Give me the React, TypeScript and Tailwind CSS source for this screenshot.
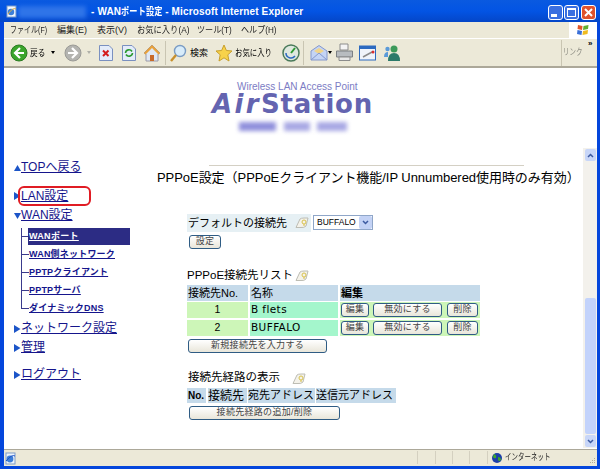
import React from "react";

const cjk = '"Liberation Sans","Noto Sans CJK JP",sans-serif';

function Memo({ x, y }: { x: number; y: number }) {
  return (
    <svg className="absolute" style={{ left: x, top: y }} width="15" height="12" viewBox="0 0 15 12">
      <path d="M1 10.5 L5 2 Q6 1 9 1 L13 1 L11 9 Q9 11 6 10.5 Z" fill="#f4f2ea" stroke="#bdbdb4" strokeWidth="1" />
      <circle cx="9" cy="5" r="2" fill="none" stroke="#d8c14a" strokeWidth="1" />
      <path d="M9 7 V9" stroke="#d8c14a" />
    </svg>
  );
}

function Btn({ x, y, w, h = 13, children }: { x: number; y: number; w: number; h?: number; children: React.ReactNode }) {
  return (
    <div
      className="absolute flex items-center justify-center rounded-[3px] border border-[#2f5c84] bg-gradient-to-b from-white to-[#e9e6da] text-[9px] tracking-[0.3px] text-[#444444]"
      style={{ left: x, top: y, width: w, height: h, fontFamily: cjk }}
    >
      {children}
    </div>
  );
}

function Cell({ x, y, w, h, bg, children, cls = "" }: { x: number; y: number; w: number; h: number; bg: string; children?: React.ReactNode; cls?: string }) {
  return (
    <div className={"absolute flex items-center whitespace-nowrap text-black " + cls} style={{ left: x, top: y, width: w, height: h, background: bg, fontFamily: cjk }}>
      {children}
    </div>
  );
}

function NavLink({ x, y, children, size = 12, arrow, ay }: { x: number; y: number; children: React.ReactNode; size?: number; arrow?: "up" | "right" | "down"; ay?: number }) {
  return (
    <>
      {arrow && (
        <span className="absolute text-[#1a5fd0]" style={{ left: 14, top: ay ?? y + 4, fontSize: 0 }}>
          <svg width="7" height="8" viewBox="0 0 7 8">
            {arrow === "up" && <path d="M0 7 L3.5 1 L7 7 Z" fill="#1c55c8" />}
            {arrow === "right" && <path d="M0 0 L6.5 4 L0 8 Z" fill="#1c55c8" />}
            {arrow === "down" && <path d="M0 1 L7 1 L3.5 7 Z" fill="#1c55c8" />}
          </svg>
        </span>
      )}
      <span className="absolute whitespace-nowrap text-[#15158c] underline" style={{ left: x, top: y, fontSize: size, lineHeight: "14px", fontFamily: cjk }}>
        {children}
      </span>
    </>
  );
}

const dejavu = '"DejaVu Sans","Noto Sans CJK JP",sans-serif';

export default function App() {
  return (
    <div className="relative h-[469px] w-[600px] overflow-hidden bg-white" style={{ fontFamily: cjk }}>
      {/* Title bar */}
      <div className="absolute left-0 top-0 h-[22px] w-[600px] bg-gradient-to-b from-[#0a5ae0] via-[#0354e4] to-[#0446c8]" />
      <svg className="absolute left-[5px] top-[5px]" width="13" height="13" viewBox="0 0 13 13">
        <rect x="2" y="1" width="9" height="11" fill="#f4f8ff" stroke="#7d9cc8" />
        <circle cx="6" cy="7" r="3.2" fill="#3d7fd8" />
        <path d="M3 9 Q8 2 11 4" stroke="#e8b23a" fill="none" />
      </svg>
      <div className="absolute left-[18px] top-[6px] h-[12px] w-[68px] bg-[#2f74e8] blur-[2px]" />
      <div className="absolute left-[91px] top-[5px] whitespace-nowrap text-[10px] font-bold leading-[14px] tracking-[0.15px] text-white">
        - WAN<span className="inline-block w-[41px] origin-left scale-x-[0.82]">ポート設定</span> - Microsoft Internet Explorer
      </div>
      {/* window buttons */}
      <div className="absolute left-[548px] top-[5px] h-[15px] w-[15px] rounded-[3px] border border-white bg-[#3a6fe0]">
        <div className="absolute bottom-[2px] left-[2px] h-[3px] w-[6px] bg-white" />
      </div>
      <div className="absolute left-[564px] top-[5px] h-[15px] w-[15px] rounded-[3px] border border-white bg-[#3a6fe0]">
        <div className="absolute left-[2px] top-[2px] h-[9px] w-[9px] border border-t-2 border-white" />
      </div>
      <div className="absolute left-[581px] top-[5px] flex h-[15px] w-[15px] items-center justify-center rounded-[3px] border border-white bg-[#e0532c]">
        <svg width="11" height="11" viewBox="0 0 11 11"><path d="M2 2 L9 9 M9 2 L2 9" stroke="#fff" strokeWidth="2" /></svg>
      </div>

      {/* window borders */}
      <div className="absolute left-0 top-[22px] h-[447px] w-[4px] bg-[#0446dc]" />
      <div className="absolute left-[597px] top-[22px] h-[447px] w-[3px] bg-[#0446dc]" />
      <div className="absolute bottom-0 left-0 h-[3px] w-[600px] bg-[#0446dc]" />

      {/* Menu bar */}
      <div className="absolute left-[4px] top-[22px] h-[16px] w-[593px] bg-[#ece9d8]" />
      <div className="absolute left-[10px] top-[22px] origin-left scale-x-[0.78] whitespace-nowrap text-[9px] leading-[16px] text-[#222222]">ファイル(F)</div>
      <div className="absolute left-[57px] top-[22px] whitespace-nowrap text-[9px] leading-[16px] text-[#222222]">編集(E)</div>
      <div className="absolute left-[97px] top-[22px] whitespace-nowrap text-[9px] leading-[16px] text-[#222222]">表示(V)</div>
      <div className="absolute left-[137px] top-[22px] origin-left scale-x-[0.92] whitespace-nowrap text-[9px] leading-[16px] text-[#222222]">お気に入り(A)</div>
      <div className="absolute left-[197px] top-[22px] origin-left scale-x-[0.9] whitespace-nowrap text-[9px] leading-[16px] text-[#222222]">ツール(T)</div>
      <div className="absolute left-[241px] top-[22px] origin-left scale-x-[0.9] whitespace-nowrap text-[9px] leading-[16px] text-[#222222]">ヘルプ(H)</div>
      <div className="absolute left-[569px] top-[22px] flex h-[16px] w-[28px] items-center justify-center bg-white">
        <svg width="14" height="13" viewBox="0 0 14 13">
          <path d="M2 1 L6.5 2 L6 6 L1.5 5 Z" fill="#e0562a" />
          <path d="M7.5 2 L12.5 1 L12 5 L7 6 Z" fill="#5fae32" />
          <path d="M1.5 6 L6 7 L5.5 11 L1 10 Z" fill="#3a6fd8" />
          <path d="M7 7 L12 6 L11.5 10 L6.5 11 Z" fill="#f0bc20" />
        </svg>
      </div>

      {/* Toolbar */}
      <div className="absolute left-[4px] top-[38px] h-[29px] w-[593px] border-t border-white bg-[#ece9d8]" />
      <div className="absolute left-[4px] top-[66px] h-[2px] w-[593px] bg-[#aca899]" />
      <svg className="absolute left-[10px] top-[44px]" width="18" height="18" viewBox="0 0 18 18">
        <circle cx="9" cy="9" r="8" fill="#3aa52c" stroke="#2a7a22" />
        <path d="M10 4 L5 9 L10 14 M5.5 9 H14" stroke="#fff" strokeWidth="2.2" fill="none" />
      </svg>
      <span className="absolute left-[30px] top-[46px] origin-left scale-x-[0.85] text-[9px] leading-[14px] text-black">戻る</span>
      <span className="absolute left-[51px] top-[51px] h-0 w-0 border-x-[2.5px] border-t-[3px] border-x-transparent border-t-black" />
      <svg className="absolute left-[64px] top-[44px]" width="18" height="18" viewBox="0 0 18 18">
        <circle cx="9" cy="9" r="8" fill="#b4b4b0" stroke="#9a9a96" />
        <path d="M8 4 L13 9 L8 14 M12.5 9 H4" stroke="#fff" strokeWidth="2.2" fill="none" />
      </svg>
      <span className="absolute left-[87px] top-[51px] h-0 w-0 border-x-[2.5px] border-t-[3px] border-x-transparent border-t-[#b0b0a8]" />
      <svg className="absolute left-[98px] top-[44px]" width="16" height="18" viewBox="0 0 16 18">
        <path d="M1.5 1.5 H11 L14.5 5 V16.5 H1.5 Z" fill="#e4ecfa" stroke="#7a90c0" />
        <path d="M5 6.5 L10.5 12 M10.5 6.5 L5 12" stroke="#d41c1c" strokeWidth="2" />
      </svg>
      <svg className="absolute left-[121px] top-[44px]" width="16" height="18" viewBox="0 0 16 18">
        <path d="M1.5 1.5 H11 L14.5 5 V16.5 H1.5 Z" fill="#e4ecfa" stroke="#7a90c0" />
        <path d="M4.5 9 A3.5 3.5 0 0 1 11 7.5 M11.5 9 A3.5 3.5 0 0 1 5 10.5" stroke="#2c9a30" strokeWidth="1.6" fill="none" />
      </svg>
      <svg className="absolute left-[143px] top-[44px]" width="18" height="18" viewBox="0 0 18 18">
        <path d="M1 9 L9 1 L17 9 L15 10 V17 H3 V10 Z" fill="#dfe8f4" stroke="#9a9aa8" />
        <path d="M1 9 L9 1 L17 9 L15.5 10.5 L9 4 L2.5 10.5 Z" fill="#e9a23a" />
        <rect x="7" y="11" width="4" height="6" fill="#c86a2a" />
      </svg>
      <div className="absolute left-[165px] top-[41px] h-[24px] w-px bg-[#c9c5b2]" />
      <svg className="absolute left-[169px] top-[44px]" width="18" height="18" viewBox="0 0 18 18">
        <circle cx="11" cy="7" r="5.5" fill="#d8ecfa" stroke="#7a9cc4" strokeWidth="1.4" />
        <path d="M7 11 L2 17" stroke="#c8902c" strokeWidth="2.4" />
      </svg>
      <span className="absolute left-[190px] top-[46px] text-[9px] leading-[14px] text-black">検索</span>
      <svg className="absolute left-[215px] top-[44px]" width="18" height="18" viewBox="0 0 18 18">
        <path d="M9 1 L11.4 6.5 L17 7 L12.8 10.8 L14 17 L9 13.8 L4 17 L5.2 10.8 L1 7 L6.6 6.5 Z" fill="#f8d24a" stroke="#c8a02c" />
      </svg>
      <span className="absolute left-[235px] top-[46px] origin-left scale-x-[0.82] whitespace-nowrap text-[9px] leading-[14px] text-black">お気に入り</span>
      <svg className="absolute left-[282px] top-[44px]" width="18" height="18" viewBox="0 0 18 18">
        <circle cx="9" cy="9" r="8" fill="#dfe8df" stroke="#4a7a5a" strokeWidth="1.5" />
        <path d="M9 9 L13 4" stroke="#2c9a30" strokeWidth="2" />
        <path d="M4 9 A5 5 0 0 0 13 12" stroke="#2c6ac0" strokeWidth="1.5" fill="none" />
      </svg>
      <div className="absolute left-[303px] top-[41px] h-[24px] w-px bg-[#c9c5b2]" />
      <svg className="absolute left-[310px] top-[44px]" width="18" height="18" viewBox="0 0 18 18">
        <path d="M1 7 L9 1.5 L17 7 V16 H1 Z" fill="#c4d4f4" stroke="#8498cc" />
        <path d="M4 7 L9 4 L14 7 L9 10 Z" fill="#f0d48a" />
        <path d="M1 16 L9 9 L17 16" stroke="#8498cc" fill="none" />
      </svg>
      <span className="absolute left-[328px] top-[51px] h-0 w-0 border-x-[2.5px] border-t-[3px] border-x-transparent border-t-black" />
      <svg className="absolute left-[335px] top-[43px]" width="19" height="19" viewBox="0 0 19 19">
        <path d="M5 1 H13 V7 H5 Z" fill="#f4f4f4" stroke="#8c8c8c" />
        <path d="M1.5 8 H17.5 V14 H1.5 Z" fill="#b8bcc0" stroke="#7c8084" />
        <path d="M4 14 H15 V17.5 H4 Z" fill="#e8e8e8" stroke="#8c8c8c" />
      </svg>
      <svg className="absolute left-[359px] top-[45px]" width="17" height="16" viewBox="0 0 17 16">
        <rect x="0.5" y="1" width="16" height="14" fill="#f0f4fa" stroke="#2c6ac0" />
        <rect x="0.5" y="1" width="16" height="3" fill="#2c6ac0" />
        <path d="M4 12 L13 7" stroke="#8a8a8a" strokeWidth="1.5" />
        <circle cx="14" cy="7" r="1.5" fill="#d83030" />
      </svg>
      <svg className="absolute left-[383px] top-[44px]" width="18" height="18" viewBox="0 0 18 18">
        <circle cx="11" cy="5" r="3.5" fill="#3c9a5a" />
        <path d="M5 17 Q5 9 11 9 Q17 9 17 17 Z" fill="#2c7a6a" />
        <circle cx="4.5" cy="5" r="2.2" fill="#5a9ad8" />
        <path d="M1 13 Q1 8 5 8 L5 13 Z" fill="#5a9ad8" />
      </svg>
      <div className="absolute left-[561px] top-[40px] h-[26px] w-px bg-[#c9c5b2]" />
      <span className="absolute left-[563px] top-[45px] origin-left scale-x-[0.72] whitespace-nowrap text-[9px] leading-[14px] text-[#8a8a80]">リンク</span>
      <span className="absolute left-[588px] top-[39px] text-[8px] font-bold leading-[10px] text-black">»</span>

      {/* Logo */}
      <div className="absolute left-[237px] top-[81px] whitespace-nowrap text-[10px] leading-[12px] text-[#7c7cc4]" style={{ fontFamily: '"Liberation Sans",sans-serif' }}>
        Wireless LAN Access Point
      </div>
      <div className="absolute left-[212px] top-[93px] whitespace-nowrap text-[26px] font-bold leading-[22px] text-[#6464b0]" style={{ fontFamily: dejavu }}>
        <span className="italic tracking-[2.4px]">Air</span><span className="tracking-[0.8px]">Station</span>
      </div>
      <div className="absolute left-[239px] top-[122px] h-[9px] w-[37px] bg-[#9090dc] blur-[2px]" />
      <div className="absolute left-[284px] top-[122px] h-[9px] w-[26px] bg-[#a8a8e4] blur-[2px]" />
      <div className="absolute left-[317px] top-[122px] h-[9px] w-[30px] bg-[#a8a8e4] blur-[2px]" />

      {/* Side nav */}
      <NavLink x={21} y={160} arrow="up" ay={164}>TOPへ戻る</NavLink>
      <NavLink x={21} y={189} arrow="right" ay={192}>LAN設定</NavLink>
      <div className="absolute left-[18px] top-[186px] h-[20px] w-[73px] rounded-[6px] border-2 border-[#e01c24]" />
      <NavLink x={21} y={208} arrow="down" ay={212}>WAN設定</NavLink>

      <div className="absolute left-[21px] top-[228px] h-[81px] w-px bg-[#3a3a8c]" />
      {[236, 254, 272, 290, 308].map((t) => (
        <div key={t} className="absolute left-[21px] h-px w-[8px] bg-[#3a3a8c]" style={{ top: t }} />
      ))}
      <div className="absolute left-[28px] top-[228px] h-[17px] w-[102px] bg-[#2c2c84]" />
      <span className="absolute left-[29px] top-[230px] whitespace-nowrap text-[9px] font-bold leading-[12px] tracking-[0.3px] text-white underline">WANポート</span>
      {[
        ["WAN側ネットワーク", 248],
        ["PPTPクライアント", 266],
        ["PPTPサーバ", 284],
        ["ダイナミックDNS", 302],
      ].map(([label, t]) => (
        <span key={label as string} className="absolute left-[29px] whitespace-nowrap text-[9px] font-bold leading-[12px] tracking-[0.2px] text-[#15158c] underline" style={{ top: t as number }}>
          {label}
        </span>
      ))}

      <NavLink x={21} y={321} arrow="right" ay={325}>ネットワーク設定</NavLink>
      <NavLink x={21} y={340} arrow="right" ay={344}>管理</NavLink>
      <NavLink x={21} y={367} arrow="right" ay={371}>ログアウト</NavLink>

      {/* Main content */}
      <div className="absolute left-[209px] top-[165px] h-px w-[315px] bg-[#d4d0c4]" />
      <div className="absolute left-[157px] top-[170px] whitespace-nowrap text-[13px] leading-[16px] tracking-[-0.05px] text-black">
        PPPoE設定（PPPoEクライアント機能/IP Unnumbered使用時のみ有効）
      </div>

      <Cell x={187} y={214} w={124} h={18} bg="#e6f0f4" cls="text-[11px] pl-[1px]">デフォルトの接続先</Cell>
      <Memo x={295} y={217} />
      <div className="absolute left-[313px] top-[215px] flex h-[15px] w-[60px] items-center border border-[#8fa6c8] bg-white pl-[3px] text-[8.5px] text-black">BUFFALO</div>
      <div className="absolute left-[359px] top-[216px] flex h-[13px] w-[13px] items-center justify-center rounded-[2px] bg-[#c3d2f5]">
        <svg width="7" height="5" viewBox="0 0 7 5"><path d="M1 1 L3.5 3.5 L6 1" stroke="#3c5aa0" strokeWidth="1.5" fill="none" /></svg>
      </div>
      <Btn x={189} y={235} w={32} h={14}>設定</Btn>

      <div className="absolute left-[187px] top-[268px] whitespace-nowrap text-[11.5px] leading-[15px] text-black">PPPoE接続先リスト</div>
      <Memo x={295} y={270} />

      <Cell x={187} y={285} w={61} h={16} bg="#c5daea" cls="text-[11px] pl-[1px]">接続先No.</Cell>
      <Cell x={250} y={285} w={88} h={16} bg="#c5daea" cls="text-[11px] pl-[1px]">名称</Cell>
      <Cell x={340} y={285} w={140} h={16} bg="#c5daea" cls="text-[11px] pl-[1px] font-bold">編集</Cell>

      <Cell x={187} y={302} w={61} h={16} bg="#cdf6b8" cls="text-[10.5px] justify-center">1</Cell>
      <Cell x={250} y={302} w={88} h={16} bg="#a4f6cc" cls="text-[10.5px] pl-[1px] tracking-[0.4px]"><span style={{ fontFamily: dejavu }}>B&nbsp;flets</span></Cell>
      <Cell x={340} y={302} w={140} h={16} bg="#cdf6b8" />
      <Cell x={187} y={320} w={61} h={16} bg="#cdf6b8" cls="text-[10.5px] justify-center">2</Cell>
      <Cell x={250} y={320} w={88} h={16} bg="#a4f6cc" cls="text-[10.5px] pl-[1px] tracking-[0.4px]"><span style={{ fontFamily: dejavu }}>BUFFALO</span></Cell>
      <Cell x={340} y={320} w={140} h={16} bg="#cdf6b8" />

      {[303, 321].map((t) => (
        <React.Fragment key={t}>
          <Btn x={341} y={t} w={28} h={14}>編集</Btn>
          <Btn x={373} y={t} w={69} h={14}>無効にする</Btn>
          <Btn x={447} y={t} w={31} h={14}>削除</Btn>
        </React.Fragment>
      ))}
      <Btn x={188} y={339} w={139} h={14}>新規接続先を入力する</Btn>

      <div className="absolute left-[188px] top-[370px] whitespace-nowrap text-[11.5px] leading-[15px] text-black">接続先経路の表示</div>
      <Memo x={292} y={373} />
      <Cell x={187} y={388} w={19} h={15} bg="#c5daea" cls="text-[10px] font-bold pl-[1px]">No.</Cell>
      <Cell x={208} y={388} w={39} h={15} bg="#c5daea" cls="text-[12px]">接続先</Cell>
      <Cell x={248} y={388} w={67} h={15} bg="#c5daea" cls="text-[11px]">宛先アドレス</Cell>
      <Cell x={316} y={388} w={80} h={15} bg="#c5daea" cls="text-[11px]">送信元アドレス</Cell>
      <Btn x={189} y={406} w={151} h={14}>接続先経路の追加/削除</Btn>

      {/* Scrollbar */}
      <div className="absolute left-[583px] top-[148px] h-[300px] w-[14px] bg-[#f3f1ec]" />
      <div className="absolute left-[585px] top-[149px] flex h-[12px] w-[11px] items-center justify-center rounded-[2px] bg-[#c8d6f8]">
        <svg width="7" height="5" viewBox="0 0 7 5"><path d="M1 4 L3.5 1.5 L6 4" stroke="#3c5aa0" strokeWidth="1.5" fill="none" /></svg>
      </div>
      <div className="absolute left-[585px] top-[298px] h-[136px] w-[11px] rounded-[2px] bg-[#c3d3fb]" />
      <div className="absolute left-[585px] top-[435px] flex h-[12px] w-[11px] items-center justify-center rounded-[2px] bg-[#c8d6f8]">
        <svg width="7" height="5" viewBox="0 0 7 5"><path d="M1 1 L3.5 3.5 L6 1" stroke="#3c5aa0" strokeWidth="1.5" fill="none" /></svg>
      </div>

      {/* Status bar */}
      <div className="absolute left-[4px] top-[449px] h-[17px] w-[593px] border-t border-[#aca899] bg-[#ece9d8]" />
      <svg className="absolute left-[4px] top-[452px]" width="13" height="13" viewBox="0 0 13 13">
        <rect x="2" y="1" width="9" height="11" fill="#eef4fc" stroke="#7d9cc8" />
        <circle cx="6" cy="7" r="3.4" fill="#3d7fd8" />
        <path d="M2 9 Q8 2 11 4" stroke="#1c55c8" fill="none" />
      </svg>
      {[417, 435, 452, 469, 487].map((l) => (
        <div key={l} className="absolute top-[451px] h-[13px] w-px bg-[#d4d0c0]" style={{ left: l }} />
      ))}
      <svg className="absolute left-[491px] top-[452px]" width="12" height="12" viewBox="0 0 12 12">
        <circle cx="6" cy="6" r="5" fill="#1c3fa8" />
        <path d="M3 2 Q6 3 5 6 Q3 7 2 5 Z M7 5 Q10 5 10 8 Q8 10 7 8 Z" fill="#3ca82c" />
      </svg>
      <span className="absolute left-[505px] top-[451px] origin-left scale-x-[0.72] whitespace-nowrap text-[9px] leading-[12px] text-[#222222]">インターネット</span>
      <svg className="absolute left-[588px] top-[457px]" width="8" height="8" viewBox="0 0 8 8">
        <path d="M6 1 h1 v1 h-1 Z M4 3 h1 v1 h-1 Z M6 3 h1 v1 h-1 Z M2 5 h1 v1 h-1 Z M4 5 h1 v1 h-1 Z M6 5 h1 v1 h-1 Z" fill="#b0ac98" />
      </svg>
    </div>
  );
}
